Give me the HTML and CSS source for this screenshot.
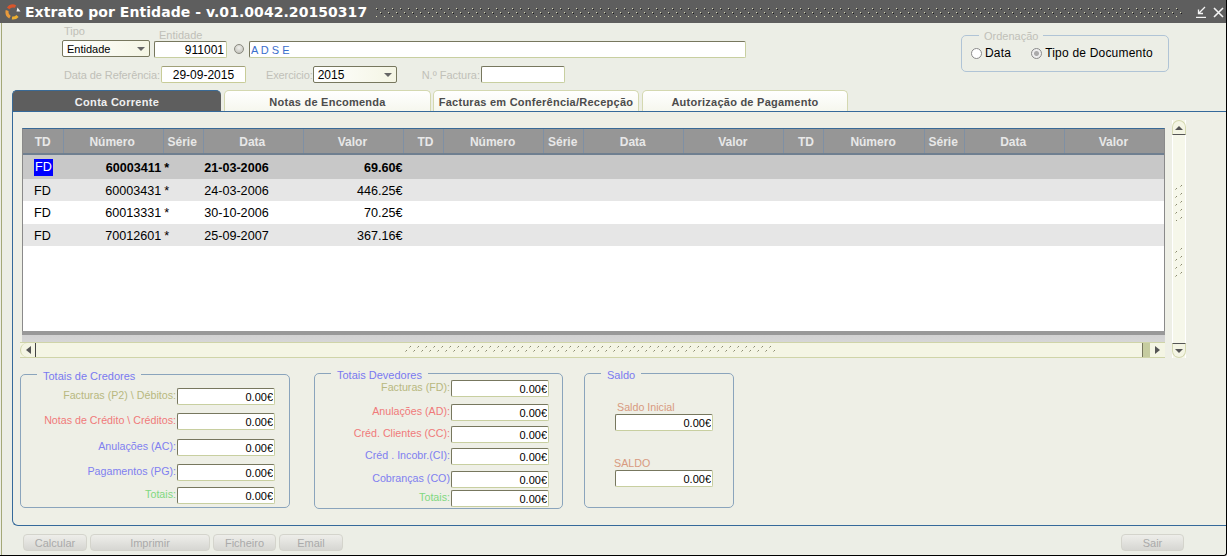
FILE: index.html
```html
<!DOCTYPE html>
<html lang="pt">
<head>
  <meta charset="UTF-8">
  <title>Extrato por Entidade</title>
  <link rel="stylesheet" href="styles.css">
</head>
<body>
  <svg class="defs" width="0" height="0">
    <defs>
      <pattern id="titleDots" width="8" height="8" patternUnits="userSpaceOnUse">
        <rect x="1" y="1" width="1" height="1" fill="#d8d8b8"/>
        <rect x="2" y="2" width="1" height="1" fill="#1c1c1c"/>
        <rect x="5" y="5" width="1" height="1" fill="#d8d8b8"/>
        <rect x="6" y="6" width="1" height="1" fill="#1c1c1c"/>
      </pattern>
      <pattern id="gripH" width="8" height="8" patternUnits="userSpaceOnUse">
        <rect x="5" y="0" width="1" height="1" fill="#8a8a70"/>
        <rect x="4" y="1" width="1" height="1" fill="#b8b8a0"/>
        <rect x="1" y="4" width="1" height="1" fill="#8a8a70"/>
        <rect x="0" y="5" width="1" height="1" fill="#b8b8a0"/>
      </pattern>
      <pattern id="gripV" width="8" height="8" patternUnits="userSpaceOnUse">
        <rect x="1" y="3" width="1" height="1" fill="#8a8a70"/>
        <rect x="0" y="4" width="1" height="1" fill="#b8b8a0"/>
        <rect x="6" y="0" width="1" height="1" fill="#8a8a70"/>
        <rect x="5" y="1" width="1" height="1" fill="#b8b8a0"/>
      </pattern>
    </defs>
  </svg>

  <div class="window">
    <div class="titlebar">
      <svg class="logo" width="16" height="16" viewBox="0 0 16 16" fill="none" stroke-width="3">
        <path d="M3.2 4.5 A6 6 0 0 1 10.5 2.5" stroke="#d8562c"/>
        <path d="M2.2 6.5 A6 6 0 0 0 5 13.2" stroke="#e89a3c"/>
        <path d="M7 14 A6 6 0 0 0 12.5 12" stroke="#eeb030"/>
        <path d="M12.5 3.5 L15.5 7.5 L11.5 7.5 Z" fill="#f0f0f0" stroke="none"/>
      </svg>
      <h1 class="title">Extrato por Entidade - v.01.0042.20150317</h1>
      <svg class="title-grip" height="10"><rect width="100%" height="100%" fill="url(#titleDots)"/></svg>
      <svg class="win-btn" width="12" height="12" viewBox="0 0 12 12" fill="none" stroke="#f4f4f4">
        <path d="M1 11.5 H11" stroke-width="1.4"/>
        <path d="M10 1 L4 7 M3.5 3.5 V7.5 H8" stroke-width="1.3"/>
      </svg>
      <svg class="win-btn" width="12" height="12" viewBox="0 0 12 12" fill="none" stroke="#f4f4f4" stroke-width="1.6">
        <path d="M2 2 L11 11 M11 2 L2 11"/>
      </svg>
    </div>

    <div class="body">
      <div class="filters">
        <div class="filter-fields">
          <div class="filter-row">
            <div class="field field-tipo">
              <label class="caption">Tipo</label>
              <div class="select select-tipo"><span>Entidade</span><i class="select-arrow"></i></div>
            </div>
            <div class="field field-entidade">
              <label class="caption">Entidade</label>
              <input class="input input-entidade" type="text" value="911001" readonly>
            </div>
            <span class="lookup"></span>
            <input class="input input-nome" type="text" value="A D S E" readonly>
          </div>
          <div class="filter-row filter-row-2">
            <label class="caption inline">Data de Referência:</label>
            <input class="input input-data" type="text" value="29-09-2015" readonly>
            <label class="caption inline exercicio">Exercicio:</label>
            <div class="select select-ano"><span>2015</span><i class="select-arrow"></i></div>
            <label class="caption inline factura">N.º Factura:</label>
            <input class="input input-factura" type="text" readonly>
          </div>
        </div>
        <fieldset class="ordenacao">
          <legend>Ordenação</legend>
          <span class="radio"></span><span class="radio-text">Data</span>
          <span class="radio radio-on"></span><span class="radio-text">Tipo de Documento</span>
        </fieldset>
      </div>

      <div class="tabs">
        <div class="tab tab-active">Conta Corrente</div>
        <div class="tab tab-2">Notas de Encomenda</div>
        <div class="tab tab-3">Facturas em Conferência/Recepção</div>
        <div class="tab tab-4">Autorização de Pagamento</div>
      </div>

      <div class="panel">
        <div class="grid-area">
          <div class="grid-col">
            <div class="grid-wrap">
              <table class="grid">
                <colgroup>
                  <col class="c-td"><col class="c-num"><col class="c-ser"><col class="c-dat"><col class="c-val">
                  <col class="c-td"><col class="c-num"><col class="c-ser"><col class="c-dat"><col class="c-val">
                  <col class="c-td"><col class="c-num"><col class="c-ser"><col class="c-dat"><col class="c-val">
                </colgroup>
                <thead>
                  <tr>
                    <th class="th-first">TD</th><th>Número</th><th>Série</th><th>Data</th><th>Valor</th>
                    <th class="th-td">TD</th><th>Número</th><th>Série</th><th>Data</th><th>Valor</th>
                    <th class="th-td">TD</th><th>Número</th><th>Série</th><th>Data</th><th>Valor</th>
                  </tr>
                </thead>
                <tbody>
                  <tr class="row-sel h24">
                    <td class="td"><span class="cursor">FD</span></td><td class="num">60003411</td><td class="ser">*</td><td class="dat">21-03-2006</td><td class="val">69.60€</td><td colspan="10"></td>
                  </tr>
                  <tr class="row-alt h22">
                    <td class="td">FD</td><td class="num">60003431</td><td class="ser">*</td><td class="dat">24-03-2006</td><td class="val">446.25€</td><td colspan="10"></td>
                  </tr>
                  <tr class="h23">
                    <td class="td">FD</td><td class="num">60013331</td><td class="ser">*</td><td class="dat">30-10-2006</td><td class="val">70.25€</td><td colspan="10"></td>
                  </tr>
                  <tr class="row-alt h22">
                    <td class="td">FD</td><td class="num">70012601</td><td class="ser">*</td><td class="dat">25-09-2007</td><td class="val">367.16€</td><td colspan="10"></td>
                  </tr>
                </tbody>
              </table>
            </div>
            <div class="grid-foot"></div>
            <div class="hscroll">
              <span class="hs-btn hs-left"><i class="tri tri-left"></i></span>
              <svg class="hs-grip" width="372" height="8"><rect width="100%" height="100%" fill="url(#gripH)"/></svg>
              <span class="hs-block"></span>
              <span class="hs-btn hs-right"><i class="tri tri-right"></i></span>
            </div>
          </div>
          <div class="vscroll">
            <span class="vs-btn vs-up"><i class="tri tri-up"></i></span>
            <svg class="vs-grip vs-grip-1" width="8" height="36"><rect width="100%" height="100%" fill="url(#gripV)"/></svg>
            <svg class="vs-grip vs-grip-2" width="8" height="30"><rect width="100%" height="100%" fill="url(#gripV)"/></svg>
            <span class="vs-btn vs-down"><i class="tri tri-down"></i></span>
          </div>
        </div>

        <div class="totals">
          <fieldset class="group credores">
            <legend>Totais de Credores</legend>
            <div class="trow gap-5"><label class="c-olive">Facturas (P2) \ Débitos:</label><input class="input amount" type="text" value="0.00€" readonly></div>
            <div class="trow gap-8"><label class="c-red">Notas de Crédito \ Créditos:</label><input class="input amount" type="text" value="0.00€" readonly></div>
            <div class="trow gap-9"><label class="c-blue">Anulações (AC):</label><input class="input amount" type="text" value="0.00€" readonly></div>
            <div class="trow gap-8"><label class="c-blue">Pagamentos (PG):</label><input class="input amount" type="text" value="0.00€" readonly></div>
            <div class="trow gap-6"><label class="c-green">Totais:</label><input class="input amount" type="text" value="0.00€" readonly></div>
          </fieldset>

          <fieldset class="group devedores">
            <legend>Totais Devedores</legend>
            <div class="trow first-up"><label class="c-olive">Facturas (FD):</label><input class="input amount" type="text" value="0.00€" readonly></div>
            <div class="trow gap-7"><label class="c-red">Anulações (AD):</label><input class="input amount" type="text" value="0.00€" readonly></div>
            <div class="trow gap-5"><label class="c-red">Créd. Clientes (CC):</label><input class="input amount" type="text" value="0.00€" readonly></div>
            <div class="trow gap-5"><label class="c-blue">Créd . Incobr.(CI):</label><input class="input amount" type="text" value="0.00€" readonly></div>
            <div class="trow gap-6"><label class="c-blue">Cobranças (CO)</label><input class="input amount" type="text" value="0.00€" readonly></div>
            <div class="trow gap-2"><label class="c-green">Totais:</label><input class="input amount" type="text" value="0.00€" readonly></div>
          </fieldset>

          <fieldset class="group saldo">
            <legend>Saldo</legend>
            <label class="saldo-label saldo-inicial">Saldo Inicial</label>
            <input class="input amount" type="text" value="0.00€" readonly>
            <label class="saldo-label saldo-final">SALDO</label>
            <input class="input amount" type="text" value="0.00€" readonly>
          </fieldset>
        </div>
      </div>

      <div class="footer">
        <button class="btn btn-calc" disabled>Calcular</button>
        <button class="btn btn-print" disabled>Imprimir</button>
        <button class="btn btn-file" disabled>Ficheiro</button>
        <button class="btn btn-mail" disabled>Email</button>
        <button class="btn btn-exit" disabled>Sair</button>
      </div>
    </div>
  </div>
</body>
</html>
```

FILE: styles.css
```css
html, body { margin: 0; padding: 0; height: 558px; overflow: hidden; background: #fff; font-family: "Liberation Sans", Arial, sans-serif; font-size: 11px; color: #000; }
.defs { display: block; height: 0; }
.window { width: 1226px; height: 555px; background: #eceee6; border-right: 1px solid #000; border-bottom: 1px solid #000; border-radius: 0 0 3px 0; display: flex; flex-direction: column; overflow: hidden; }

/* title bar */
.titlebar { height: 23px; flex: none; background: #5e5e5e; display: flex; align-items: center; padding-left: 5px; padding-right: 2px; }
.logo { flex: none; margin-right: 4px; }
.title { margin: 0; font-family: "DejaVu Sans", Verdana, sans-serif; font-size: 14px; font-weight: bold; letter-spacing: .05px; color: #fff; white-space: nowrap; }
.title-grip { flex: 1; min-width: 0; margin: 0 6px 0 8px; }
.win-btn { flex: none; margin-left: 5px; }

.body { flex: 1; display: flex; flex-direction: column; min-height: 0; margin-left: 1px; border-left: 1px solid #a4a878; }

/* filters */
.filters { height: 67px; flex: none; display: flex; justify-content: space-between; padding-left: 60px; box-sizing: border-box; }
.filter-row { display: flex; align-items: flex-end; height: 35px; }
.filter-row-2 { height: 17px; margin-top: 8px; align-items: center; }
.field { display: flex; flex-direction: column; }
.caption { color: #c0c0b8; font-size: 11px; line-height: 12px; }
.caption.inline { margin-right: 1px; text-align: right; }
.field-tipo .caption { margin: 0 0 3px 2px; }
.field-entidade { margin-left: 4px; }
.field-entidade .caption { margin: 0 0 0 5px; line-height: 11px; }
.input { box-sizing: border-box; height: 17px; padding: 0 2px; margin: 0; font-family: "Liberation Sans", Arial, sans-serif; font-size: 12px; color: #000; background: #fff; border: 1px solid #c8cfa0; border-top-color: #77775e; border-left-color: #77775e; border-radius: 2px; outline: none; text-align: right; }
.select { box-sizing: border-box; height: 17px; margin-bottom: 1px; display: flex; align-items: center; justify-content: space-between; padding: 0 4px; font-size: 11px; background: linear-gradient(90deg, #fff, #f4f5e4); border: 1px solid #77775e; border-radius: 2px; }
.select-arrow { width: 0; height: 0; border: 4px solid transparent; border-top: 4px solid #666; border-bottom: 0; }
.select-tipo { width: 88px; }
.input-entidade { width: 73px; }
.lookup { width: 10px; height: 10px; margin: 0 5px 4px 7px; border-radius: 50%; background: radial-gradient(circle at 50% 35%, #f0f0ec, #b8b8b0); border: 1px solid #8a8a80; box-sizing: border-box; }
.input-nome { width: 497px; padding-left: 1px; text-align: left; color: #3a6ecc; font-size: 11px; }
.filter-row-2 .caption.inline:first-child { margin-left: 2px; letter-spacing: -.1px; }
.input-data { width: 85px; text-align: center; border-color: #c8cc98; border-top-color: #a0a078; border-left-color: #c8cc98; }
.caption.inline.exercicio { margin: 0 0 0 20px; letter-spacing: -.1px; }
.select-ano { width: 84px; margin-bottom: 0; font-size: 12px; }
.factura { margin-left: 25px; }
.input-factura { width: 84px; }

.ordenacao { box-sizing: border-box; width: 208px; height: 44px; margin: 5px 57px 0 0; padding: 3px 0 0 9px; border: 1px solid #b0c4d6; border-radius: 5px; display: flex; align-items: flex-start; }
.ordenacao legend { margin-left: 8px; padding: 2px 5px 0 5px; font-size: 11px; line-height: 13px; color: #c0c0b8; }
.radio { box-sizing: border-box; width: 11px; height: 11px; margin-top: 2px; border: 1px solid #8a8a8a; border-radius: 50%; background: #fff; flex: none; }
.radio-on { margin-left: 20px; background: radial-gradient(circle, #aaa 0 2px, #eee 3px); }
.radio-text { margin-left: 3px; font-size: 12px; line-height: 14px; letter-spacing: .2px; }

/* tabs */
.tabs { height: 21px; flex: none; display: flex; padding-left: 10px; box-sizing: border-box; }
.tab { box-sizing: border-box; height: 21px; border: 1px solid #d4d8b0; border-bottom: 0; border-radius: 5px 5px 0 0; background: linear-gradient(#fff, #f6f7ee); color: #4c4c4c; font-weight: bold; font-size: 11px; letter-spacing: .25px; line-height: 22px; text-align: center; }
.tab-active { width: 209px; background: #5e5e5e; color: #f0f0f0; border: 0; border-top: 1px solid #3a6a96; border-left: 1px solid #3a6a96; letter-spacing: .3px; }
.tab-2 { width: 207px; margin-left: 3px; }
.tab-3 { width: 206px; margin-left: 2px; }
.tab-4 { width: 206px; margin-left: 3px; }

/* panel */
.panel { box-sizing: border-box; height: 415px; flex: none; margin-left: 10px; border: 1px solid #35699a; border-right: 0; border-radius: 0 0 0 6px; background: #eeefe6; padding-left: 7px; }
.grid-area { display: flex; align-items: flex-start; }
.grid-col { width: 1145px; margin-top: 16px; }
.grid-wrap { box-sizing: border-box; height: 203px; margin-left: 2px; background: #fff; border-left: 1px solid #8a8a8a; border-right: 1px solid #8a8a8a; border-top: 1px solid #3a6a96; overflow: hidden; }
.grid { width: 1142px; border-collapse: collapse; table-layout: fixed; }
.c-td { width: 40px; } .c-num { width: 100px; } .c-ser { width: 40px; } .c-dat { width: 100px; } .c-val { width: 100px; }
.grid th { height: 23px; padding: 1px 2px 0 0; background: #969696; color: #e8e8e8; font-size: 12px; font-weight: bold; border-right: 1px solid #7f90a4; border-bottom: 2px solid #6f7f90; }
.grid th.th-first { padding: 1px 0 0 0; }
.grid th.th-td { padding: 1px 0 0 4px; }
.grid td { padding: 0; font-size: 12.6px; white-space: nowrap; }
.h24 td { height: 23px; padding-top: 1px; } .h23 td { height: 23px; } .h22 td { height: 21px; padding-top: 1px; }
.row-sel { background: #c8c8c8; font-weight: bold; }
.row-alt { background: #e6e6e6; }
.td { padding-left: 11px !important; }
.num { text-align: right; padding-right: 2px !important; }
.ser { padding-left: 1px !important; }
.dat { padding-left: 1px !important; }
.val { text-align: right; padding-right: 1px !important; }
.cursor { display: inline-block; padding: 0 1px; line-height: 17px; background: #0000ff; color: #fff; font-weight: normal; }
.grid-foot { height: 7px; margin-left: 2px; background: linear-gradient(#d2d2d2, #d6d6d6); border-top: 4px solid #999; }

.hscroll { box-sizing: border-box; height: 16px; display: flex; align-items: center; background: #f4f5e4; border-top: 1px solid #cfd4a8; border-bottom: 1px solid #cfd4a8; }
.hs-btn { width: 14px; height: 14px; display: flex; align-items: center; justify-content: center; flex: none; background: #f4f5e4; }
.hs-left { border-right: 1px solid #444; border-radius: 7px 0 0 7px; border-left: 1px solid #cfd4a8; }
.hs-grip { margin-left: 369px; flex: none; }
.hs-block { width: 8px; height: 14px; background: #c6cca0; margin-left: auto; border-left: 1px solid #77775e; box-sizing: border-box; flex: none; }
.hs-right { width: 15px; border-radius: 0 7px 7px 0; }
.tri { display: block; width: 0; height: 0; border: 4px solid transparent; }
.tri-left { border-right: 5px solid #555; border-left: 0; }
.tri-right { border-left: 5px solid #555; border-right: 0; }
.tri-up { border-bottom: 4px solid #555; border-top: 0; }
.tri-down { border-top: 4px solid #555; border-bottom: 0; }

.vscroll { box-sizing: border-box; width: 14px; height: 238px; margin: 8px 0 0 7px; display: flex; flex-direction: column; align-items: center; background: #f6f7ea; border-left: 1px solid #fff; border-right: 1px solid #fff; }
.vs-btn { box-sizing: border-box; width: 14px; height: 15px; flex: none; display: flex; align-items: center; justify-content: center; background: #f4f5e4; border: 1px solid #d4d8b0; }
.vs-up { border-radius: 7px 7px 0 0; border-bottom: 1px solid #555; }
.vs-down { border-radius: 0 0 7px 7px; border-top: 1px solid #555; margin-top: auto; }
.vs-grip { flex: none; }
.vs-grip-1 { margin-top: 50px; }
.vs-grip-2 { margin-top: 27px; }

/* totals */
.totals { display: flex; align-items: flex-start; margin-top: 8px; }
.group { box-sizing: border-box; margin: 0; padding: 0; border: 1px solid #8aa4bc; border-radius: 5px; min-width: 0; }
.group legend { margin-left: 16px; padding: 4px 6px 0 6px; font-size: 11px; line-height: 13px; color: #7a7af0; }
.credores { width: 270px; height: 142px; }
.devedores { width: 249px; height: 144px; margin: -1px 0 0 24px; }
.saldo { width: 150px; height: 143px; margin: -1px 0 0 21px; }
.trow { display: flex; justify-content: flex-end; align-items: flex-start; }
.credores .trow { padding-right: 14px; }
.devedores .trow { padding-right: 13px; }
.trow label { margin-right: 1px; font-size: 10.7px; line-height: 13px; margin-top: 1px; }
.first-up { margin-top: -2px; }
.gap-2 { margin-top: 2px; } .gap-5 { margin-top: 5px; } .gap-6 { margin-top: 6px; } .gap-7 { margin-top: 7px; } .gap-8 { margin-top: 8px; } .gap-9 { margin-top: 9px; }
.amount { width: 98px; font-size: 11px; padding-right: 1px; }
.c-olive { color: #b8b880; } .c-red { color: #f07a7a; } .c-blue { color: #8080f0; } .c-green { color: #80d880; }
.saldo-label { display: block; color: #d89a80; line-height: 13px; font-size: 10.7px; }
.saldo-inicial { margin: 19px 0 0 32px; }
.saldo-final { margin: 26px 0 0 29px; }
.saldo .amount { display: block; margin-left: 30px; }

/* footer */
.footer { flex: 1; display: flex; align-items: flex-start; padding: 8px 42px 0 21px; }
.btn { box-sizing: border-box; height: 17px; padding: 0; font-family: "Liberation Sans", Arial, sans-serif; font-size: 11px; color: #aaa; background: linear-gradient(#eeeeea, #d6d6d2); border: 1px solid #d4d4cc; border-radius: 4px; }
.btn-calc { width: 64px; }
.btn-print { width: 120px; margin-left: 3px; }
.btn-file { width: 63px; margin-left: 3px; }
.btn-mail { width: 64px; margin-left: 3px; }
.btn-exit { width: 63px; margin-left: auto; }
```
